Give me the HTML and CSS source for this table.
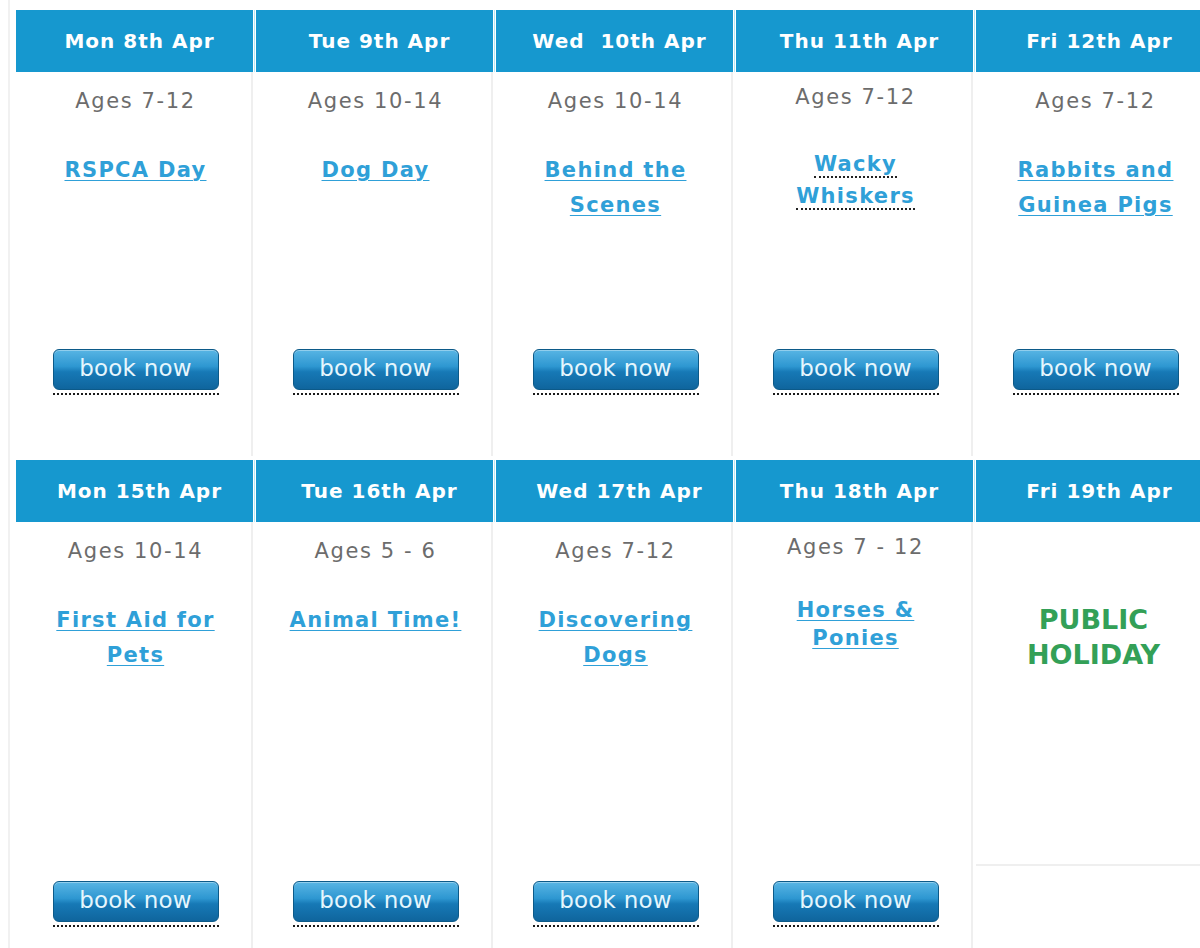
FILE: index.html
```html
<!DOCTYPE html>
<html lang="en">
<head>
<meta charset="utf-8">
<title>Holiday Club Schedule</title>
<link rel="stylesheet" href="styles.css">
</head>
<body>
<div class="schedule">
  <div class="week week-1">
    <div class="day">
      <div class="day-head">Mon 8th Apr</div>
      <div class="day-body">
        <p class="ages">Ages 7-12</p>
        <p class="activity"><a href="#">RSPCA Day</a></p>
        <a class="book" href="#"><span class="btn">book now</span></a>
      </div>
    </div>
    <div class="day">
      <div class="day-head">Tue 9th Apr</div>
      <div class="day-body">
        <p class="ages">Ages 10-14</p>
        <p class="activity"><a href="#">Dog Day</a></p>
        <a class="book" href="#"><span class="btn">book now</span></a>
      </div>
    </div>
    <div class="day">
      <div class="day-head">Wed&nbsp; 10th Apr</div>
      <div class="day-body">
        <p class="ages">Ages 10-14</p>
        <p class="activity"><a href="#">Behind the Scenes</a></p>
        <a class="book" href="#"><span class="btn">book now</span></a>
      </div>
    </div>
    <div class="day">
      <div class="day-head">Thu 11th Apr</div>
      <div class="day-body tight">
        <p class="ages">Ages 7-12</p>
        <p class="activity"><a class="dotted" href="#">Wacky Whiskers</a></p>
        <a class="book" href="#"><span class="btn">book now</span></a>
      </div>
    </div>
    <div class="day">
      <div class="day-head">Fri 12th Apr</div>
      <div class="day-body">
        <p class="ages">Ages 7-12</p>
        <p class="activity"><a href="#">Rabbits and Guinea Pigs</a></p>
        <a class="book" href="#"><span class="btn">book now</span></a>
      </div>
    </div>
  </div>

  <div class="week week-2">
    <div class="day">
      <div class="day-head">Mon 15th Apr</div>
      <div class="day-body">
        <p class="ages">Ages 10-14</p>
        <p class="activity"><a href="#">First Aid for Pets</a></p>
        <a class="book" href="#"><span class="btn">book now</span></a>
      </div>
    </div>
    <div class="day">
      <div class="day-head">Tue 16th Apr</div>
      <div class="day-body">
        <p class="ages">Ages 5 - 6</p>
        <p class="activity"><a href="#">Animal Time!</a></p>
        <a class="book" href="#"><span class="btn">book now</span></a>
      </div>
    </div>
    <div class="day">
      <div class="day-head">Wed 17th Apr</div>
      <div class="day-body">
        <p class="ages">Ages 7-12</p>
        <p class="activity"><a href="#">Discovering Dogs</a></p>
        <a class="book" href="#"><span class="btn">book now</span></a>
      </div>
    </div>
    <div class="day">
      <div class="day-head">Thu 18th Apr</div>
      <div class="day-body tighter">
        <p class="ages">Ages 7 - 12</p>
        <p class="activity"><a href="#">Horses &amp; Ponies</a></p>
        <a class="book" href="#"><span class="btn">book now</span></a>
      </div>
    </div>
    <div class="day">
      <div class="day-head">Fri 19th Apr</div>
      <div class="day-body holiday-body">
        <div class="holiday"><p class="holiday-text">PUBLIC HOLIDAY</p></div>
        <div class="holiday-rest"></div>
      </div>
    </div>
  </div>
</div>
</body>
</html>
```

FILE: styles.css
```css
html, body {
  margin: 0;
  padding: 0;
  background: #ffffff;
  overflow: hidden;
}

body {
  font-family: "DejaVu Sans", Verdana, sans-serif;
  width: 1200px;
  height: 948px;
}

.schedule {
  margin-left: 8px;
  padding-left: 6px;
  padding-top: 10px;
  border-left: 2px solid #f1f1f1;
  display: flex;
  flex-direction: column;
  gap: 4px;
  width: 1240px;
}

.week {
  display: grid;
  grid-template-columns: repeat(5, 237px);
  column-gap: 3px;
}

.day {
  display: flex;
  flex-direction: column;
}

.day-head {
  height: 62px;
  background: #1698cf;
  color: #ffffff;
  font-weight: bold;
  font-size: 20px;
  letter-spacing: 1px;
  display: flex;
  align-items: center;
  justify-content: center;
  padding-left: 10px;
  box-sizing: border-box;
  box-shadow: 1px 0 0 #ffffff, 2px 0 0 #b4e8f6;
  white-space: nowrap;
}

.day-body {
  display: flex;
  flex-direction: column;
  align-items: center;
  text-align: center;
  padding-top: 17px;
  padding-bottom: 61px;
  padding-left: 4px;
  border-right: 2px solid #efefef;
  box-sizing: border-box;
}

.week-1 .day-body { height: 384px; }
.week-2 .day-body { height: 466px; }

.ages {
  margin: 0;
  font-size: 21px;
  line-height: 24px;
  letter-spacing: 1.6px;
  color: #6c6c6c;
}

.activity {
  margin: 40px 0 0;
  width: 186px;
  font-size: 21px;
  line-height: 35px;
  font-weight: bold;
  letter-spacing: 1.3px;
}

.activity a {
  color: #2fa0d8;
  text-decoration: underline;
  text-decoration-thickness: 1px;
  text-underline-offset: 3px;
}

.activity a.dotted {
  text-decoration: none;
  border-bottom: 2px dotted #222;
}

.tight { padding-top: 13px; }
.tight .activity { margin-top: 39px; line-height: 32px; }

.tighter { padding-top: 13px; }
.tighter .activity { margin-top: 37px; line-height: 28px; }

.book {
  margin-top: auto;
  display: block;
  width: 166px;
  padding-bottom: 3px;
  border-bottom: 2px dotted #1a1a1a;
  text-decoration: none;
}

.btn {
  display: flex;
  align-items: center;
  justify-content: center;
  height: 41px;
  box-sizing: border-box;
  border: 1px solid #0c5a89;
  border-radius: 6px;
  background: linear-gradient(#58b5e4 0%, #2e97d1 42%, #1779b6 56%, #0f659d 100%);
  color: #e6f6fd;
  font-size: 23px;
  letter-spacing: 0.2px;
  padding-bottom: 3px;
  box-shadow: inset 0 1px 0 rgba(255,255,255,0.35);
}

.holiday-body {
  padding: 0;
  align-items: stretch;
}

.holiday {
  height: 344px;
  border-bottom: 2px solid #efefef;
  padding-top: 80px;
  box-sizing: border-box;
}

.holiday-text {
  margin: 0 auto;
  width: 150px;
  font-size: 27px;
  line-height: 35px;
  font-weight: bold;
  color: #33a057;
  text-align: center;
}

.holiday-rest {
  flex: 1;
}
```
